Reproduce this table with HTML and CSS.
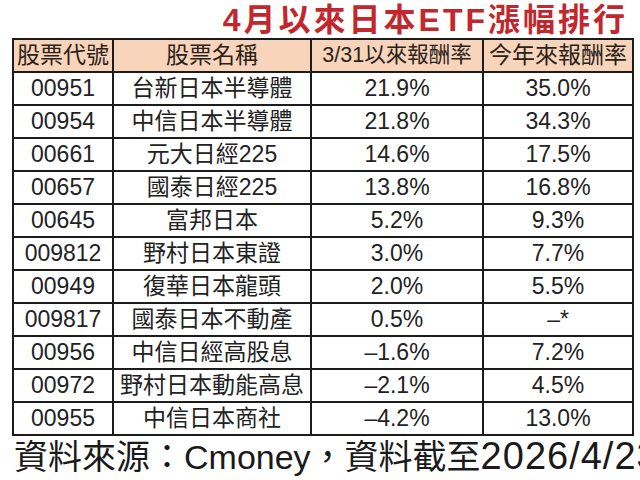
FILE: index.html
```html
<!DOCTYPE html>
<html lang="zh-Hant">
<head>
<meta charset="utf-8">
<link rel="stylesheet" href="styles.css">
</head>
<body>
<div class="page">
  <h1 class="title">4月以來日本ETF漲幅排行</h1>
  <table class="rank">
    <colgroup>
      <col class="c1"><col class="c2"><col class="c3"><col class="c4">
    </colgroup>
    <thead>
      <tr>
        <th>股票代號</th>
        <th>股票名稱</th>
        <th class="narrow">3/31以來報酬率</th>
        <th>今年來報酬率</th>
      </tr>
    </thead>
    <tbody>
      <tr><td>00951</td><td>台新日本半導體</td><td>21.9%</td><td>35.0%</td></tr>
      <tr><td>00954</td><td>中信日本半導體</td><td>21.8%</td><td>34.3%</td></tr>
      <tr><td>00661</td><td>元大日經225</td><td>14.6%</td><td>17.5%</td></tr>
      <tr><td>00657</td><td>國泰日經225</td><td>13.8%</td><td>16.8%</td></tr>
      <tr><td>00645</td><td>富邦日本</td><td>5.2%</td><td>9.3%</td></tr>
      <tr><td>009812</td><td>野村日本東證</td><td>3.0%</td><td>7.7%</td></tr>
      <tr><td>00949</td><td>復華日本龍頭</td><td>2.0%</td><td>5.5%</td></tr>
      <tr><td>009817</td><td>國泰日本不動產</td><td>0.5%</td><td>–*</td></tr>
      <tr><td>00956</td><td>中信日經高股息</td><td>–1.6%</td><td>7.2%</td></tr>
      <tr><td>00972</td><td>野村日本動能高息</td><td>–2.1%</td><td>4.5%</td></tr>
      <tr><td>00955</td><td>中信日本商社</td><td>–4.2%</td><td>13.0%</td></tr>
    </tbody>
  </table>
  <p class="source">資料來源：Cmoney，資料截至<span class="date">2026/4/23</span></p>
</div>
</body>
</html>
```

FILE: styles.css
```css
html, body {
  margin: 0;
  padding: 0;
  background: #ffffff;
}

.page {
  width: 640px;
  height: 480px;
  overflow: hidden;
  font-family: "Liberation Sans", "Noto Sans CJK TC", sans-serif;
  color: #222222;
}

.title {
  margin: 0;
  height: 38px;
  line-height: 40px;
  padding-right: 12px;
  text-align: right;
  font-size: 32px;
  font-weight: 700;
  letter-spacing: 3px;
  color: #c1272d;
  white-space: nowrap;
}

.rank {
  margin-left: 12px;
  width: 620px;
  table-layout: fixed;
  border-collapse: collapse;
  border: 2px solid #1c1c1c;
}

.c1 { width: 100px; }
.c2 { width: 198px; }
.c3 { width: 172px; }
.c4 { width: 150px; }

.rank th,
.rank td {
  border: 2px solid #1c1c1c;
  height: 31px;
  padding: 0;
  text-align: center;
  vertical-align: middle;
  font-size: 23px;
  font-weight: 400;
  line-height: 31px;
  white-space: nowrap;
  overflow: hidden;
}

.rank thead th {
  background: #f7d4ba;
  color: #2a2218;
}

.rank th.narrow {
  font-size: 21.5px;
}

.source {
  margin: 0 0 0 14px;
  height: 40px;
  line-height: 40px;
  font-size: 34px;
  white-space: nowrap;
  color: #1a1a1a;
}

.date {
  font-size: 38px;
  letter-spacing: 1px;
}
```
